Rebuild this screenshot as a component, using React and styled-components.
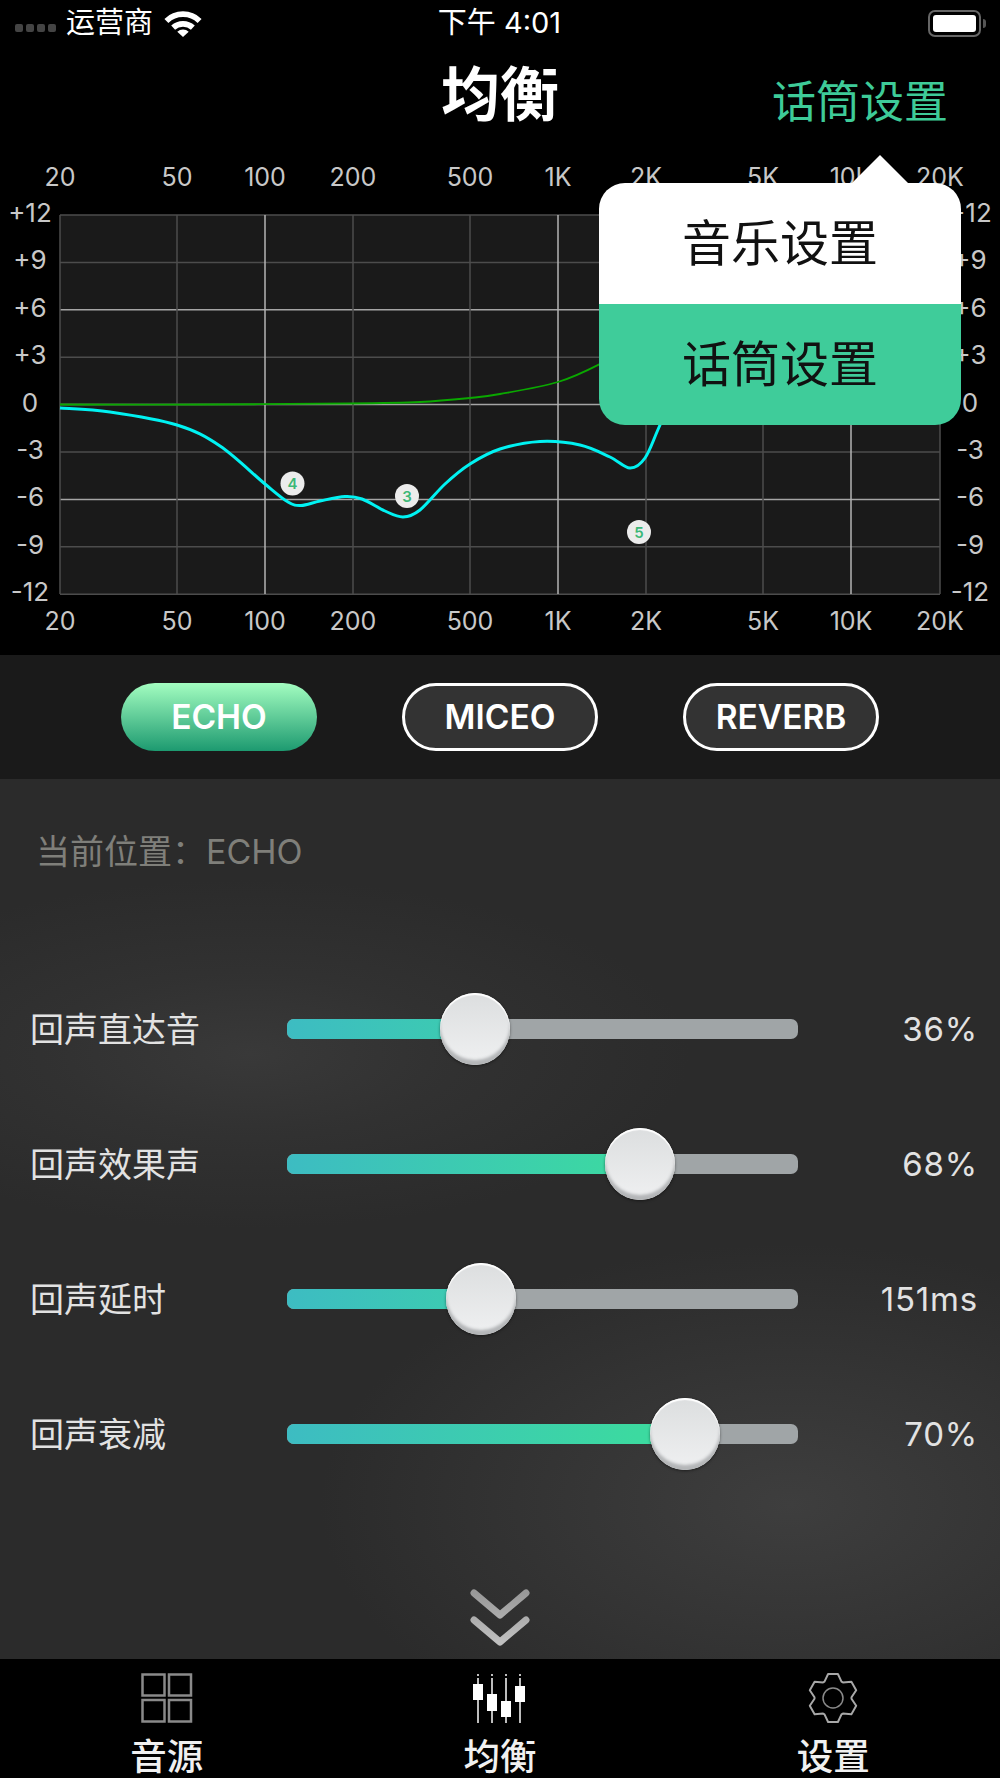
import styled, { createGlobalStyle } from "styled-components";

const GlobalStyle = createGlobalStyle`
  html, body {
    margin: 0;
    padding: 0;
    background: #000;
    font-family: Inter, "Noto Sans CJK SC", sans-serif;
  }
  * {
    box-sizing: border-box;
  }
`;

const Page = styled.div`
  width: 1000px;
  height: 1778px;
  display: flex;
  flex-direction: column;
  overflow: hidden;
  background: #000;
`;

const TopSection = styled.div`
  position: relative;
  height: 655px;
  flex: none;
  background: #000;
`;

const StatusBar = styled.div`
  display: grid;
  grid-template-columns: 1fr auto 1fr;
  align-items: center;
  height: 46px;
  padding: 0 12px 0 15px;
  color: #fff;
  font-size: 29px;
`;

const StatusLeft = styled.div`
  display: flex;
  align-items: center;
`;

const SignalDots = styled.div`
  display: flex;
  gap: 3px;
  margin: 10px 10px 0 0;
`;

const SignalDot = styled.span`
  width: 8px;
  height: 8px;
  border-radius: 2px;
  background: #444;
`;

const Carrier = styled.span`
  margin-right: 11px;
  line-height: 46px;
`;

const Clock = styled.span`
  margin-right: 4px;
  line-height: 46px;
`;

const Battery = styled.div`
  justify-self: end;
  position: relative;
  width: 53px;
  height: 27px;
  margin-right: 7px;
  padding: 3px;
  border: 2px solid #666;
  border-radius: 7px;

  &::before {
    content: "";
    display: block;
    height: 100%;
    border-radius: 3px;
    background: #fff;
  }
  &::after {
    content: "";
    position: absolute;
    right: -7px;
    top: 7px;
    width: 3px;
    height: 9px;
    border-radius: 0 3px 3px 0;
    background: #555;
  }
`;

const Nav = styled.div`
  display: grid;
  grid-template-columns: 1fr auto 1fr;
  height: 94px;
`;

const Title = styled.h1`
  grid-column: 2;
  margin: 15px 0 0;
  color: #fff;
  font-size: 59px;
  line-height: 68px;
  font-weight: 700;
`;

const NavAction = styled.span`
  justify-self: end;
  margin: 30px 52px 0 0;
  color: #3ecb98;
  font-size: 44px;
  line-height: 52px;
`;

const ChartSvg = styled.svg`
  display: block;
  width: 1000px;
  height: 515px;

  text {
    font-family: Inter, sans-serif;
    font-size: 25px;
    fill: #c8c8c8;
    text-anchor: middle;
    dominant-baseline: central;
  }
  .level {
    font-size: 26px;
  }
  .node {
    font-size: 15px;
    font-weight: 600;
    fill: #3cb878;
  }
`;

const Popover = styled.div`
  position: absolute;
  left: 599px;
  top: 183px;
  width: 362px;
  height: 242px;

  &::before {
    content: "";
    position: absolute;
    left: 252px;
    top: -28px;
    width: 58px;
    height: 29px;
    background: #fff;
    clip-path: polygon(50% 0, 100% 100%, 0 100%);
  }
`;

const PopoverItem = styled.div`
  height: 121px;
  display: flex;
  align-items: center;
  justify-content: center;
  padding-bottom: 9px;
  color: #111;
  font-size: 49px;
  background: ${(p) => (p.$active ? "#3fcc9a" : "#fff")};
  border-radius: ${(p) => (p.$active ? "0 0 26px 26px" : "26px 26px 0 0")};
`;

const ModeBar = styled.div`
  height: 124px;
  flex: none;
  display: flex;
  align-items: center;
  justify-content: center;
  gap: 85px;
  background: #1a1a1a;
`;

const ModeButton = styled.div`
  width: 196px;
  height: 68px;
  display: flex;
  align-items: center;
  justify-content: center;
  border-radius: 34px;
  color: #fff;
  font-size: 33.5px;
  font-weight: 600;
  background: ${(p) =>
    p.$active ? "linear-gradient(180deg, #a3fdc0 0%, #1d9a70 100%)" : "#333"};
  border: ${(p) => (p.$active ? "none" : "3px solid #fff")};
`;

const Panel = styled.div`
  flex: 1;
  display: flex;
  flex-direction: column;
  padding: 53px 0 13px;
  background:
    radial-gradient(ellipse 440px 175px at 250px 275px, #393939 0%, rgba(57, 57, 57, 0.45) 45%, rgba(57, 57, 57, 0) 100%),
    radial-gradient(ellipse 470px 260px at 790px 725px, #3e3e3e 0%, rgba(62, 62, 62, 0.5) 50%, rgba(62, 62, 62, 0) 100%),
    #2b2b2b;
`;

const Position = styled.div`
  margin: 0 0 89px 36px;
  color: #7f7f7a;
  font-size: 34px;
  line-height: 40px;
`;

const SliderRow = styled.div`
  display: grid;
  grid-template-columns: 257px 511px 1fr;
  align-items: center;
  height: 135px;
  padding: 0 22px 0 30px;
`;

const SliderLabel = styled.span`
  color: #e2e2e2;
  font-size: 34px;
  line-height: 40px;
  margin-top: 3px;
`;

const SliderValue = styled.span`
  color: #e2e2e2;
  font-size: 33px;
  letter-spacing: 0.8px;
  text-align: right;
`;

const Track = styled.div`
  position: relative;
  height: 20px;
  border-radius: 7px;
  background: #a0a5a7;
`;

const TrackFill = styled.div`
  height: 100%;
  border-radius: 7px 0 0 7px;
  background: linear-gradient(90deg, #3dbcc2 0, #3cdaa0 350px);
`;

const Knob = styled.div`
  position: absolute;
  top: 50%;
  width: 70px;
  height: 72px;
  transform: translate(-50%, -50%);
  border-radius: 50%;
  background: linear-gradient(180deg, #dcdedf 0%, #eff0f1 100%);
  box-shadow:
    inset 0 2px 1px #fff,
    inset 0 -5px 3px #b4b6b8,
    0 1px 3px rgba(0, 0, 0, 0.5);
`;

const MoreIcon = styled.svg`
  display: block;
  margin: auto auto 0;
  width: 60px;
  height: 58px;
`;

const TabBar = styled.div`
  height: 119px;
  flex: none;
  display: grid;
  grid-template-columns: repeat(3, 1fr);
  padding-top: 14px;
  background: #000;
`;

const Tab = styled.div`
  display: flex;
  flex-direction: column;
  align-items: center;
`;

const TabIcon = styled.svg`
  display: block;
  width: 60px;
  height: 50px;
`;

const TabLabel = styled.span`
  margin-top: 14px;
  color: #f0f0f0;
  font-size: 36.5px;
  line-height: 40px;
  font-weight: 500;
`;

const freqs = [
  ["20", 60],
  ["50", 177],
  ["100", 265],
  ["200", 353],
  ["500", 470],
  ["1K", 558],
  ["2K", 646],
  ["5K", 763],
  ["10K", 851],
  ["20K", 940],
];
const levels = ["+12", "+9", "+6", "+3", "0", "-3", "-6", "-9", "-12"];
const levelY = (i) => 215 + i * 47.4;

const cyanCurve = [
  [60, 408], [110, 412], [177, 425], [220, 446], [265, 484], [288, 502], [301, 505.5],
  [320, 501], [345, 496.5], [362, 499], [385, 511], [403, 517], [420, 510], [445, 484],
  [470, 464], [500, 449], [540, 441.5], [580, 445], [610, 457], [630, 468], [645, 458],
  [660, 425], [685, 370],
];
const greenCurve = [
  [60, 404.5], [200, 404.5], [350, 403.5], [420, 402], [470, 398], [500, 394],
  [558, 382], [600, 364], [640, 340],
];

// catmull-rom through the points, good enough for an eq curve
const smooth = (pts) => {
  let d = `M${pts[0][0]} ${pts[0][1]}`;
  for (let i = 0; i < pts.length - 1; i++) {
    const p0 = pts[i - 1] || pts[i];
    const p1 = pts[i];
    const p2 = pts[i + 1];
    const p3 = pts[i + 2] || p2;
    const c1x = p1[0] + (p2[0] - p0[0]) / 6;
    const c1y = p1[1] + (p2[1] - p0[1]) / 6;
    const c2x = p2[0] - (p3[0] - p1[0]) / 6;
    const c2y = p2[1] - (p3[1] - p1[1]) / 6;
    d += ` C${c1x} ${c1y} ${c2x} ${c2y} ${p2[0]} ${p2[1]}`;
  }
  return d;
};

const gearPath = () => {
  const cx = 30;
  const cy = 25;
  let d = "";
  for (let i = 0; i < 6; i++) {
    const a = (i * Math.PI) / 3 - Math.PI / 2;
    const pt = (r, off) => {
      const x = cx + r * Math.cos(a + off);
      const y = cy + r * Math.sin(a + off);
      return `${x.toFixed(1)} ${y.toFixed(1)}`;
    };
    d += `${i === 0 ? "M" : "L"}${pt(18.5, -0.48)} L${pt(24.5, -0.2)} L${pt(24.5, 0.2)} L${pt(18.5, 0.48)} `;
  }
  return d + "Z";
};

const Chart = () => (
  <ChartSvg viewBox="0 140 1000 515">
    <rect x="60" y="215" width="880" height="379" fill="#1a1a1a" />
    {levels.map((l, i) => (
      <line
        key={l}
        x1="60"
        x2="940"
        y1={levelY(i)}
        y2={levelY(i)}
        stroke={i % 2 === 0 && i > 0 && i < 8 ? "#a5a5a5" : "#4c4c4c"}
        strokeWidth="1.5"
      />
    ))}
    {freqs.map(([f, x]) => (
      <line
        key={f}
        x1={x}
        x2={x}
        y1="215"
        y2="594"
        stroke={f === "100" || f === "1K" || f === "10K" ? "#b5b5b5" : "#4c4c4c"}
        strokeWidth="1.5"
      />
    ))}
    <path d={smooth(greenCurve)} fill="none" stroke="#0aa800" strokeWidth="1.8" />
    <path d={smooth(cyanCurve)} fill="none" stroke="#00f2f2" strokeWidth="3" />
    {[
      ["4", 292.5, 483.5],
      ["3", 407, 496],
      ["5", 639, 532],
    ].map(([n, x, y]) => (
      <g key={n}>
        <circle cx={x} cy={y} r="12" fill="#ececec" />
        <text className="node" x={x} y={y}>
          {n}
        </text>
      </g>
    ))}
    {freqs.map(([f, x]) => (
      <text key={f} x={x} y="176.5">
        {f}
      </text>
    ))}
    {freqs.map(([f, x]) => (
      <text key={f} x={x} y="621">
        {f}
      </text>
    ))}
    {levels.map((l, i) => (
      <text key={l} className="level" x={30} y={levelY(i) - 2.5}>
        {l}
      </text>
    ))}
    {levels.map((l, i) => (
      <text key={l} className="level" x={970} y={levelY(i) - 2.5}>
        {l}
      </text>
    ))}
  </ChartSvg>
);

const sliders = [
  { label: "回声直达音", value: "36%", pos: 36.8 },
  { label: "回声效果声", value: "68%", pos: 69 },
  { label: "回声延时", value: "151ms", pos: 38 },
  { label: "回声衰减", value: "70%", pos: 77.9 },
];

const App = () => {
  return (
    <Page>
      <GlobalStyle />
      <TopSection>
        <StatusBar>
          <StatusLeft>
            <SignalDots>
              <SignalDot />
              <SignalDot />
              <SignalDot />
              <SignalDot />
            </SignalDots>
            <Carrier>运营商</Carrier>
            <svg width="38" height="28" viewBox="0 0 36 27">
              <path d="M2 11.5A23 23 0 0 1 34 11.5" fill="none" stroke="#fff" strokeWidth="5.5" />
              <path d="M8.5 18A14 14 0 0 1 27.5 18" fill="none" stroke="#fff" strokeWidth="5.5" />
              <path d="M12.5 22A8 8 0 0 1 23.5 22L18 27Z" fill="#fff" />
            </svg>
          </StatusLeft>
          <Clock>下午 4:01</Clock>
          <Battery />
        </StatusBar>
        <Nav>
          <Title>均衡</Title>
          <NavAction>话筒设置</NavAction>
        </Nav>
        <Chart />
        <Popover>
          <PopoverItem>音乐设置</PopoverItem>
          <PopoverItem $active>话筒设置</PopoverItem>
        </Popover>
      </TopSection>

      <ModeBar>
        <ModeButton $active>ECHO</ModeButton>
        <ModeButton>MICEO</ModeButton>
        <ModeButton>REVERB</ModeButton>
      </ModeBar>

      <Panel>
        <Position>当前位置：ECHO</Position>
        {sliders.map((s) => (
          <SliderRow key={s.label}>
            <SliderLabel>{s.label}</SliderLabel>
            <Track>
              <TrackFill style={{ width: `${s.pos}%` }} />
              <Knob style={{ left: `${s.pos}%` }} />
            </Track>
            <SliderValue>{s.value}</SliderValue>
          </SliderRow>
        ))}
        <MoreIcon viewBox="0 0 60 58">
          <defs>
            <linearGradient id="more" x1="0" y1="0" x2="0" y2="1">
              <stop offset="0" stopColor="#999" />
              <stop offset="1" stopColor="#c0c0c0" />
            </linearGradient>
          </defs>
          <path
            d="M4 5L30 27L56 5M4 32L30 54L56 32"
            fill="none"
            stroke="url(#more)"
            strokeWidth="7"
            strokeLinecap="round"
            strokeLinejoin="round"
          />
        </MoreIcon>
      </Panel>

      <TabBar>
        <Tab>
          <TabIcon viewBox="0 0 60 50">
            <g fill="none" stroke="#8a8a8a" strokeWidth="2.5">
              <rect x="5.5" y="1.5" width="22" height="21" />
              <rect x="32" y="1.5" width="22" height="21" />
              <rect x="5.5" y="27" width="22" height="21.5" />
              <rect x="32" y="27" width="22" height="21.5" />
            </g>
          </TabIcon>
          <TabLabel>音源</TabLabel>
        </Tab>
        <Tab>
          <TabIcon viewBox="0 0 60 50">
            {[
              [8, 11, 16],
              [22, 21, 17],
              [36, 28, 16],
              [50, 13, 16],
            ].map(([x, y, h]) => (
              <g key={x}>
                <line x1={x} x2={x} y1="5" y2="50" stroke="#bdbdbd" strokeWidth="2" />
                <line x1={x} x2={x} y1="1" y2="3" stroke="#bdbdbd" strokeWidth="2" />
                <rect x={x - 5} y={y} width="10" height={h} fill="#fff" />
              </g>
            ))}
          </TabIcon>
          <TabLabel>均衡</TabLabel>
        </Tab>
        <Tab>
          <TabIcon viewBox="0 0 60 50">
            <path d={gearPath()} fill="none" stroke="#a8a8a8" strokeWidth="2" strokeLinejoin="round" />
            <circle cx="30" cy="25" r="10" fill="none" stroke="#8a8a8a" strokeWidth="1.5" />
          </TabIcon>
          <TabLabel>设置</TabLabel>
        </Tab>
      </TabBar>
    </Page>
  );
};

export default App;
